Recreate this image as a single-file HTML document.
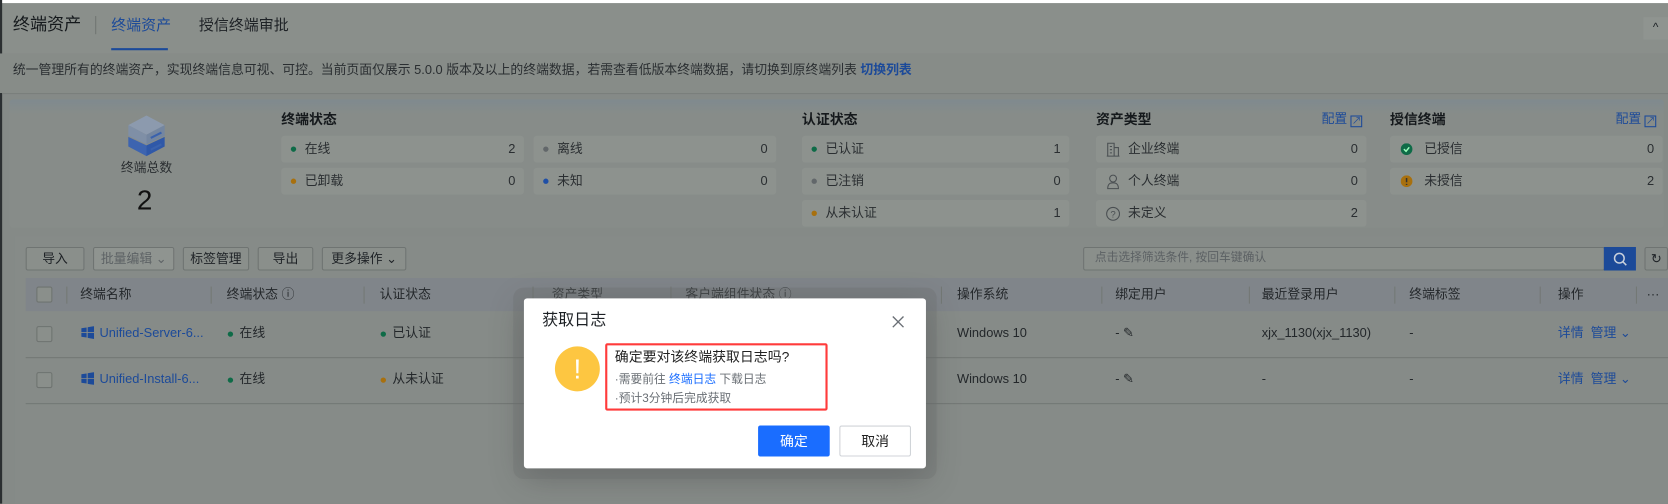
<!DOCTYPE html>
<html><head><meta charset="utf-8"><style>
*{margin:0;padding:0;box-sizing:border-box}
html,body{width:1668px;height:503px;overflow:hidden;background:#858a87}
body{font-family:"Liberation Sans","Noto Sans CJK SC",sans-serif;color:#1e2226}
#w{position:absolute;left:0;top:0;width:1560px;height:471px;transform:scale(1.06923);transform-origin:0 0;background:#858a87}
.a{position:absolute;white-space:nowrap;line-height:1.2}
.pill{position:absolute;height:25px;background:#8d928e;border-radius:3px;font-size:12px;color:#2a2e31}
.pill .l{position:absolute;left:22px;top:5px;line-height:15px}
.pill .v{position:absolute;right:8px;top:5px;line-height:15px}
.pill .d{position:absolute;left:9px;top:10px;width:5px;height:5px;border-radius:50%}
.h{font-size:13px;font-weight:bold;color:#15191c}
.btn{position:absolute;top:231px;height:22px;border:1px solid #6f7472;border-radius:2px;background:#8a8f8b;font-size:12px;text-align:center;line-height:20px;color:#1e2226}
.th{font-size:12px;top:268px;color:#23272a}
.sep{position:absolute;top:268px;width:1px;height:16px;background:#737875}
.td{font-size:12px;color:#23272a}
.blue{color:#1c4a99}
.dot{position:absolute;width:5px;height:5px;border-radius:50%}
.cb{position:absolute;left:34px;width:15px;height:15px;border:1px solid #6e7370;border-radius:2px;background:#8a8f8b}
</style></head><body><div id="w">
<div class="a" style="left:0;top:0;width:1560px;height:3px;background:#fff"></div>
<div class="a" style="left:0;top:3px;width:1560px;height:47px;background:#8a8f8b"></div>
<div class="a" style="left:0;top:0;width:2px;height:471px;background:#2b2f31"></div>
<div class="a" style="left:12px;top:14px;font-size:16px;color:#15191c">终端资产</div>
<div class="a" style="left:89px;top:15px;width:1px;height:17px;background:#707572"></div>
<div class="a blue" style="left:104px;top:15px;font-size:14px">终端资产</div>
<div class="a" style="left:104px;top:45px;width:53px;height:2px;background:#1c4a99"></div>
<div class="a" style="left:186px;top:15px;font-size:14px;color:#1e2226">授信终端审批</div>
<div class="a" style="left:1537px;top:16px;width:23px;height:21px;background:#8f9490;font-size:11px;text-align:center;line-height:21px">^</div>
<div class="a" style="left:0;top:50px;width:1560px;height:37px;background:#878c88"></div>
<div class="a" style="left:12px;top:58px;font-size:12px;color:#2a2e31">统一管理所有的终端资产，实现终端信息可视、可控。当前页面仅展示 5.0.0 版本及以上的终端数据，若需查看低版本终端数据，请切换到原终端列表 <span class="blue" style="font-weight:bold">切换列表</span></div>
<div class="a" style="left:2px;top:87px;width:1558px;height:1px;background:#7a7f7c"></div>
<div class="a" style="left:9px;top:93px;width:1547px;height:120px;background:linear-gradient(#7f8a8f 0,#878c89 14px,#878c89);border-radius:3px"></div>
<svg class="a" style="left:119px;top:107px" width="37" height="40" viewBox="0 0 37 40"><path d="M18 1 L35 10 L18 19 L1 10Z" fill="#8c9aae"/><path d="M1 10 L18 19 L18 28 L1 20Z" fill="#7f8fa6"/><path d="M35 10 L18 19 L18 28 L35 20Z" fill="#7486a0"/><path d="M1 21 L18 29 L18 39 L1 30Z" fill="#3d64b0"/><path d="M35 21 L18 29 L18 39 L35 30Z" fill="#2f58a8"/><path d="M22 22 L32 17 M22 33 L32 28" stroke="#3a62ad" stroke-width="2"/></svg>
<div class="a" style="left:113px;top:150px;font-size:12px;color:#2a2e31">终端总数</div>
<div class="a" style="left:128px;top:172px;font-size:26px;color:#111">2</div>
<div class="a h" style="left:263px;top:104px">终端状态</div>
<div class="pill" style="left:263px;top:127px;width:227px"><i class="d" style="background:#0e6b47"></i><span class="l">在线</span><span class="v">2</span></div>
<div class="pill" style="left:499px;top:127px;width:227px"><i class="d" style="background:#62676a"></i><span class="l">离线</span><span class="v">0</span></div>
<div class="pill" style="left:263px;top:157px;width:227px"><i class="d" style="background:#a8700e"></i><span class="l">已卸载</span><span class="v">0</span></div>
<div class="pill" style="left:499px;top:157px;width:227px"><i class="d" style="background:#1f4fa6"></i><span class="l">未知</span><span class="v">0</span></div>
<div class="a h" style="left:750px;top:104px">认证状态</div>
<div class="pill" style="left:750px;top:127px;width:250px"><i class="d" style="background:#0e6b47"></i><span class="l">已认证</span><span class="v">1</span></div>
<div class="pill" style="left:750px;top:157px;width:250px"><i class="d" style="background:#62676a"></i><span class="l">已注销</span><span class="v">0</span></div>
<div class="pill" style="left:750px;top:187px;width:250px"><i class="d" style="background:#a8700e"></i><span class="l">从未认证</span><span class="v">1</span></div>
<div class="a h" style="left:1025px;top:104px">资产类型</div>
<div class="a blue" style="left:1236px;top:104px;font-size:12px">配置 <span style="display:inline-block;width:11px;height:11px;border:1px solid #1c4a99;vertical-align:-1px;font-size:9px;line-height:9px">↗</span></div>
<div class="pill" style="left:1025px;top:127px;width:253px"><svg style="position:absolute;left:10px;top:6px" width="12" height="14"><path d="M1 13V1H7V13M7 5H11V13M0 13H12M3 4H5M3 7H5M3 10H5" stroke="#4a4f52" fill="none"/></svg><span class="l" style="left:30px">企业终端</span><span class="v">0</span></div>
<div class="pill" style="left:1025px;top:157px;width:253px"><svg style="position:absolute;left:10px;top:6px" width="12" height="14"><circle cx="6" cy="4" r="3.2" stroke="#4a4f52" fill="none"/><path d="M1 13.5C1 9 3 8 6 8S11 9 11 13.5Z" stroke="#4a4f52" fill="none"/></svg><span class="l" style="left:30px">个人终端</span><span class="v">0</span></div>
<div class="pill" style="left:1025px;top:187px;width:253px"><svg style="position:absolute;left:9px;top:6px" width="14" height="14"><circle cx="7" cy="7" r="6" stroke="#4a4f52" fill="none"/><text x="7" y="10.5" font-size="9" text-anchor="middle" fill="#4a4f52" font-family="Liberation Sans">?</text></svg><span class="l" style="left:30px">未定义</span><span class="v">2</span></div>
<div class="a h" style="left:1300px;top:104px">授信终端</div>
<div class="a blue" style="left:1511px;top:104px;font-size:12px">配置 <span style="display:inline-block;width:11px;height:11px;border:1px solid #1c4a99;vertical-align:-1px;font-size:9px;line-height:9px">↗</span></div>
<div class="pill" style="left:1300px;top:127px;width:255px"><svg style="position:absolute;left:10px;top:7px" width="11" height="11"><circle cx="5.5" cy="5.5" r="5.5" fill="#0e6b47"/><path d="M3 5.5L5 7.5L8 3.8" stroke="#9fb" stroke-width="1.4" fill="none"/></svg><span class="l" style="left:32px">已授信</span><span class="v">0</span></div>
<div class="pill" style="left:1300px;top:157px;width:255px"><svg style="position:absolute;left:10px;top:7px" width="11" height="11"><circle cx="5.5" cy="5.5" r="5.5" fill="#a8700e"/><path d="M5.5 2.5V6.5M5.5 8V9" stroke="#333" stroke-width="1.4"/></svg><span class="l" style="left:32px">未授信</span><span class="v">2</span></div>
<div class="a" style="left:14px;top:221px;width:1546px;height:250px;background:#868b88"></div>
<div class="btn" style="left:24px;width:55px">导入</div>
<div class="btn" style="left:87px;width:76px;color:#5d6265;background:#8f9490">批量编辑 ⌄</div>
<div class="btn" style="left:171px;width:62px">标签管理</div>
<div class="btn" style="left:241px;width:52px">导出</div>
<div class="btn" style="left:301px;width:79px">更多操作 ⌄</div>
<div class="a" style="left:1013px;top:231px;width:488px;height:22px;border:1px solid #6f7472;border-radius:2px;background:#8a8f8b;font-size:11px;color:#5c6164;padding:3px 10px">点击选择筛选条件, 按回车键确认</div>
<div class="a" style="left:1500px;top:231px;width:30px;height:22px;background:#1c4a99"><svg style="position:absolute;left:9px;top:5px" width="13" height="13"><circle cx="5.5" cy="5.5" r="4.5" stroke="#c8d0dc" stroke-width="1.4" fill="none"/><path d="M9 9L12 12" stroke="#c8d0dc" stroke-width="1.4"/></svg></div>
<div class="a" style="left:1538px;top:231px;width:22px;height:22px;border:1px solid #6f7472;border-radius:2px;text-align:center;font-size:12px;line-height:20px">↻</div>
<div class="a" style="left:24px;top:260px;width:1536px;height:31px;background:#80858a"></div>
<div class="cb" style="top:268px"></div>
<div class="sep" style="left:62px"></div><div class="sep" style="left:197px"></div><div class="sep" style="left:340px"></div><div class="sep" style="left:498px"></div><div class="sep" style="left:627px"></div><div class="sep" style="left:880px"></div><div class="sep" style="left:1030px"></div><div class="sep" style="left:1168px"></div><div class="sep" style="left:1304px"></div><div class="sep" style="left:1440px"></div><div class="sep" style="left:1530px"></div>
<div class="a th" style="left:75px">终端名称</div>
<div class="a th" style="left:212px">终端状态 ⓘ</div>
<div class="a th" style="left:355px">认证状态</div>
<div class="a th" style="left:516px">资产类型</div>
<div class="a th" style="left:641px">客户端组件状态 ⓘ</div>
<div class="a th" style="left:895px">操作系统</div>
<div class="a th" style="left:1043px">绑定用户</div>
<div class="a th" style="left:1180px">最近登录用户</div>
<div class="a th" style="left:1318px">终端标签</div>
<div class="a th" style="left:1457px">操作</div>
<div class="a th" style="left:1540px">···</div>
<div class="a" style="left:24px;top:334px;width:1536px;height:1px;background:#737875"></div>
<div class="a" style="left:24px;top:377px;width:1536px;height:1px;background:#737875"></div>
<div class="cb" style="top:305px"></div><div class="cb" style="top:348px"></div>
<svg class="a" style="left:76px;top:305px" width="12" height="12"><path d="M0 2L5 1.3V5.6H0ZM6 1.1L12 0V5.6H6ZM0 6.4H5V10.7L0 10ZM6 6.4H12V12L6 11Z" fill="#1c4a99"/></svg>
<svg class="a" style="left:76px;top:348px" width="12" height="12"><path d="M0 2L5 1.3V5.6H0ZM6 1.1L12 0V5.6H6ZM0 6.4H5V10.7L0 10ZM6 6.4H12V12L6 11Z" fill="#1c4a99"/></svg>
<div class="a td blue" style="left:93px;top:304px">Unified-Server-6...</div>
<div class="a td blue" style="left:93px;top:347px">Unified-Install-6...</div>
<i class="dot" style="left:213px;top:310px;background:#0e6b47"></i><div class="a td" style="left:224px;top:304px">在线</div>
<i class="dot" style="left:213px;top:353px;background:#0e6b47"></i><div class="a td" style="left:224px;top:347px">在线</div>
<i class="dot" style="left:356px;top:310px;background:#0e6b47"></i><div class="a td" style="left:367px;top:304px">已认证</div>
<i class="dot" style="left:356px;top:353px;background:#a8700e"></i><div class="a td" style="left:367px;top:347px">从未认证</div>
<div class="a td" style="left:895px;top:304px">Windows 10</div><div class="a td" style="left:895px;top:347px">Windows 10</div>
<div class="a td" style="left:1043px;top:304px">- ✎</div><div class="a td" style="left:1043px;top:347px">- ✎</div>
<div class="a td" style="left:1180px;top:304px">xjx_1130(xjx_1130)</div><div class="a td" style="left:1180px;top:347px">-</div>
<div class="a td" style="left:1318px;top:304px">-</div><div class="a td" style="left:1318px;top:347px">-</div>
<div class="a td blue" style="left:1457px;top:304px">详情 &nbsp;管理 ⌄</div><div class="a td blue" style="left:1457px;top:347px">详情 &nbsp;管理 ⌄</div>
<div class="a" style="left:490px;top:279px;width:376px;height:159px;background:#fff;border-radius:3px;box-shadow:0 0 0 10px rgba(110,112,112,.35),0 8px 30px rgba(60,60,60,.4)"></div>
<div class="a" style="left:507px;top:291px;font-size:15px;color:#1d2125">获取日志</div>
<svg class="a" style="left:834px;top:295px" width="12" height="12"><path d="M1 1L11 11M11 1L1 11" stroke="#6a6f75" stroke-width="1.3"/></svg>
<div class="a" style="left:519px;top:324px;width:42px;height:42px;border-radius:50%;background:#fdc641;color:#fff;text-align:center;font-size:26px;line-height:42px">!</div>
<div class="a" style="left:566px;top:321px;width:208px;height:63px;border:2px solid #ff3b3b;border-radius:2px"></div>
<div class="a" style="left:575px;top:326px;font-size:13px;color:#222">确定要对该终端获取日志吗?</div>
<div class="a" style="left:575px;top:349px;font-size:11px;color:#6a6f75">·需要前往 <span style="color:#1a6dff">终端日志</span> 下载日志</div>
<div class="a" style="left:575px;top:367px;font-size:11px;color:#6a6f75">·预计3分钟后完成获取</div>
<div class="a" style="left:709px;top:398px;width:67px;height:29px;background:#1a6dff;border-radius:2px;color:#fff;font-size:13px;text-align:center;line-height:29px">确定</div>
<div class="a" style="left:785px;top:398px;width:67px;height:29px;border:1px solid #d0d3d8;border-radius:2px;color:#222;font-size:13px;text-align:center;line-height:27px">取消</div>
</div></body></html>
